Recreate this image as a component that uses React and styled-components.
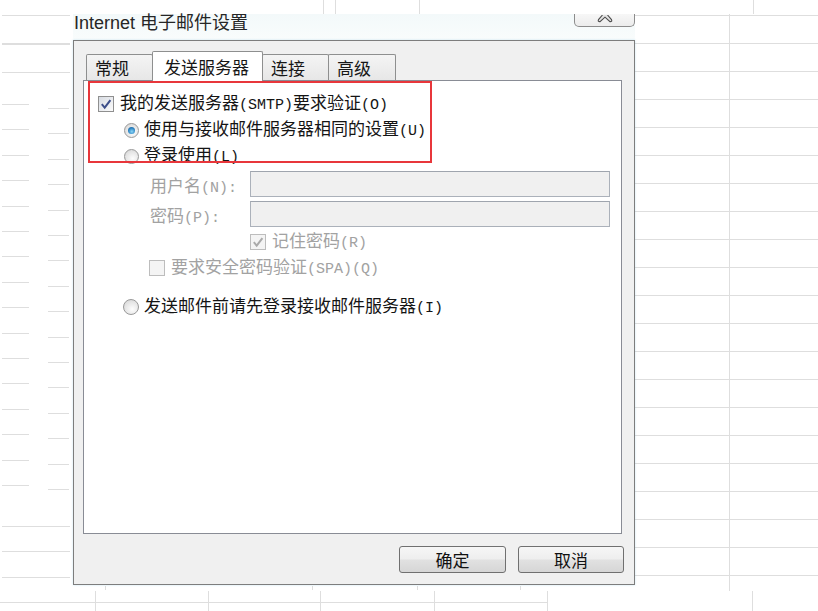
import React from 'react'
import styled, { createGlobalStyle } from 'styled-components'

const GlobalStyle = createGlobalStyle`
  html, body { margin: 0; padding: 0; background: #fff; }
  body { font-family: "Noto Sans CJK SC", sans-serif; }
`

// faint spreadsheet lines behind the dialog
const LINE = '#dedede'
const solid = `linear-gradient(${LINE}, ${LINE})`
const rows = step => `repeating-linear-gradient(to bottom, ${LINE} 0 1px, transparent 1px ${step}px)`

const sheet = [
  [rows(28), '184px 575px', '635px 15px'],
  [solid, '1px 577px', '729px 14px'],
  [solid, '1px 14px', '323px 0'],
  [solid, '1px 14px', '335px 0'],
  [solid, '1px 14px', '419px 0'],
  [solid, '1px 14px', '753px 0'],
  [rows(28.5), '68px 60px', '2px 15px'],
  [rows(25.4), '27px 390px', '2px 104px'],
  [rows(25.4), '21px 395px', '48px 108px'],
  [rows(25.5), '68px 53px', '2px 526px'],
  [solid, '547px 1px', '0 602px'],
  [solid, '1px 20px', '95px 591px'],
  [solid, '1px 20px', '208px 591px'],
  [solid, '1px 20px', '320px 591px'],
  [solid, '1px 20px', '434px 591px'],
  [solid, '1px 20px', '547px 591px'],
  [solid, '1px 20px', '752px 591px'],
  [solid, '1px 4px', '105px 586px'],
  [solid, '1px 4px', '312px 586px'],
  [solid, '1px 4px', '417px 586px'],
  [solid, '1px 4px', '520px 586px'],
]

const Desk = styled.div`
  width: 818px;
  height: 611px;
  box-sizing: border-box;
  padding: 14px 0 0 73px;
  overflow: hidden;
  background-color: #fff;
  background-repeat: no-repeat;
  background-image: ${sheet.map(s => s[0]).join(', ')};
  background-size: ${sheet.map(s => s[1]).join(', ')};
  background-position: ${sheet.map(s => s[2]).join(', ')};
`

const Window = styled.div`
  width: 562px;
  display: flex;
  flex-direction: column;
`

const TitleBar = styled.div`
  height: 26px;
  display: flex;
  justify-content: space-between;
  align-items: flex-start;
  background: linear-gradient(#f3f9fa, #f9fcfc);
`

const Title = styled.div`
  font-family: "Liberation Sans", "Noto Sans CJK SC", sans-serif;
  font-size: 18px;
  line-height: 18px;
  color: #262626;
  padding-left: 1px;
`

const CloseBtn = styled.div`
  width: 61px;
  height: 13px;
  box-sizing: border-box;
  border: 1px solid #8c8c8c;
  border-top: none;
  border-radius: 0 0 5px 5px;
  background: linear-gradient(#f7f7f7, #ececec);
  display: flex;
  justify-content: center;
  align-items: flex-end;
  padding-bottom: 3px;
`

const Body = styled.div`
  background: #f0f0f0;
  border: 1px solid #7d7d7d;
  padding: 10px 12px 11px 9px;
  display: flex;
  flex-direction: column;
  box-shadow: 0 0 2px rgba(140, 205, 230, 0.45);
`

const TabRow = styled.div`
  height: 30px;
  display: flex;
  align-items: flex-end;
  padding-left: 3px;
  margin-bottom: -1px;
  position: relative;
  z-index: 1;
`

const Tab = styled.div`
  box-sizing: border-box;
  width: ${p => p.$w}px;
  height: ${p => (p.$active ? 30 : 27)}px;
  margin-left: ${p => (p.$first ? 0 : -1)}px;
  padding: 0 ${p => (p.$active ? 11 : 8)}px;
  border: 1px solid #8e8f8f;
  border-bottom: ${p => (p.$active ? 'none' : '1px solid #898c95')};
  border-radius: 2px 2px 0 0;
  background: ${p => (p.$active ? '#fff' : 'linear-gradient(#f4f4f4, #e7e7e7)')};
  position: relative;
  z-index: ${p => (p.$active ? 2 : 1)};
  display: flex;
  align-items: center;
  font-size: 17px;
  color: #161616;
  white-space: nowrap;
`

const Panel = styled.div`
  position: relative;
  height: 454px;
  box-sizing: border-box;
  border: 1px solid #898c95;
  background: #fff;
  padding-top: 10px;
  display: flex;
  flex-direction: column;
`

const Highlight = styled.div`
  position: absolute;
  left: 4px;
  top: 0;
  width: 344px;
  height: 82px;
  box-sizing: border-box;
  border: 2px solid #e8363b;
  pointer-events: none;
`

const Row = styled.div`
  display: flex;
  align-items: center;
  height: ${p => p.$h ?? 26}px;
  margin-top: ${p => p.$mt ?? 0}px;
  padding-left: ${p => p.$indent}px;
  gap: ${p => p.$gap ?? 5}px;
  color: ${p => (p.$disabled ? '#a2a2a2' : '#141414')};
  font-size: 17px;
  white-space: nowrap;
`

const Text = styled.span`
  line-height: 24px;
`

const Lat = styled.span`
  font-family: "Liberation Mono", monospace;
  font-size: 15px;
`

const FieldLabel = styled.span`
  flex: none;
  width: 100px;
  color: #a2a2a2;
`

const Field = styled.div`
  flex: none;
  width: 360px;
  height: 26px;
  box-sizing: border-box;
  border: 1px solid #abb1ba;
  border-top-color: #9fa5ae;
  background: #f0f0f0;
`

const Box = styled.span`
  width: 16px;
  height: 16px;
  box-sizing: border-box;
  flex: none;
  border: 1px solid ${p => (p.$disabled ? '#bdbdbd' : '#8f8f8f')};
  background: ${p => (p.$disabled ? '#f4f4f4' : 'linear-gradient(135deg, #d8dce3, #fbfbfb)')};
  display: flex;
  align-items: center;
  justify-content: center;
`

const Ring = styled.span`
  width: ${p => p.$size || 15}px;
  height: ${p => p.$size || 15}px;
  box-sizing: border-box;
  flex: none;
  border-radius: 50%;
  border: 1px solid #999;
  background: radial-gradient(circle at 60% 65%, #fdfdfd 0%, #e6e6e6 55%, #cfcfcf 100%);
  display: flex;
  align-items: center;
  justify-content: center;
`

const Pip = styled.span`
  width: 7px;
  height: 7px;
  border-radius: 50%;
  background: radial-gradient(circle at 55% 65%, #8ad6f7 0%, #2f86c4 55%, #164f86 100%);
`

const Footer = styled.div`
  display: flex;
  justify-content: flex-end;
  gap: 12px;
  margin-top: 12px;
  margin-right: -2px;
`

const Button = styled.div`
  width: ${p => p.$w}px;
  height: 27px;
  box-sizing: border-box;
  border: 1px solid #707070;
  border-radius: 3px;
  background: linear-gradient(#f6f6f6 0%, #eeeeee 48%, #e1e1e1 52%, #d6d6d6 100%);
  display: flex;
  align-items: center;
  justify-content: center;
  font-size: 17px;
  color: #111;
`

const Check = ({ color }) => (
  <svg width="12" height="12" viewBox="0 0 12 12">
    <path d="M1.8 6.2 L4.7 9.6 L10.4 2.2" fill="none" stroke={color} strokeWidth="2" />
  </svg>
)

const CheckBox = ({ checked, disabled }) => (
  <Box $disabled={disabled}>
    {checked && <Check color={disabled ? '#aaaaaa' : '#3d4f8a'} />}
  </Box>
)

const Radio = ({ on, size }) => (
  <Ring $size={size}>{on && <Pip />}</Ring>
)

const CloseGlyph = () => (
  <svg width="18" height="8" viewBox="0 0 18 8">
    <path
      d="M6.5 0 L2.5 4.6 Q1.6 6.8 4 6.6 L9 2.2 L14 6.6 Q16.4 6.8 15.5 4.6 L11.5 0"
      fill="#e4e4e4"
      stroke="#4d4d4d"
      strokeWidth="1.1"
    />
  </svg>
)

const tabs = [
  { label: '常规', w: 67 },
  { label: '发送服务器', w: 111, active: true },
  { label: '连接', w: 67 },
  { label: '高级', w: 68 },
]

export default function App() {
  return (
    <>
      <GlobalStyle />
      <Desk>
        <Window>
          <TitleBar>
            <Title>Internet 电子邮件设置</Title>
            <CloseBtn><CloseGlyph /></CloseBtn>
          </TitleBar>
          <Body>
            <TabRow>
              {tabs.map((t, i) => (
                <Tab key={t.label} $w={t.w} $active={t.active} $first={i === 0}>{t.label}</Tab>
              ))}
            </TabRow>
            <Panel>
              <Row $indent={14} $gap={6}>
                <CheckBox checked />
                <Text>我的发送服务器<Lat>(SMTP)</Lat>要求验证<Lat>(O)</Lat></Text>
              </Row>
              <Row $indent={40}>
                <Radio on />
                <Text>使用与接收邮件服务器相同的设置<Lat>(U)</Lat></Text>
              </Row>
              <Row $indent={40}>
                <Radio />
                <Text>登录使用<Lat>(L)</Lat></Text>
              </Row>
              <Row $indent={66} $h={30} $gap={0}>
                <FieldLabel>用户名<Lat>(N):</Lat></FieldLabel>
                <Field />
              </Row>
              <Row $indent={66} $h={30} $gap={0}>
                <FieldLabel>密码<Lat>(P):</Lat></FieldLabel>
                <Field />
              </Row>
              <Row $indent={166} $gap={6} $mt={0} $disabled>
                <CheckBox checked disabled />
                <Text>记住密码<Lat>(R)</Lat></Text>
              </Row>
              <Row $indent={65} $gap={6} $disabled>
                <CheckBox disabled />
                <Text>要求安全密码验证<Lat>(SPA)(Q)</Lat></Text>
              </Row>
              <Row $indent={39} $mt={13}>
                <Radio size={16} />
                <Text>发送邮件前请先登录接收邮件服务器<Lat>(I)</Lat></Text>
              </Row>
              <Highlight />
            </Panel>
            <Footer>
              <Button $w={107}>确定</Button>
              <Button $w={106}>取消</Button>
            </Footer>
          </Body>
        </Window>
      </Desk>
    </>
  )
}
